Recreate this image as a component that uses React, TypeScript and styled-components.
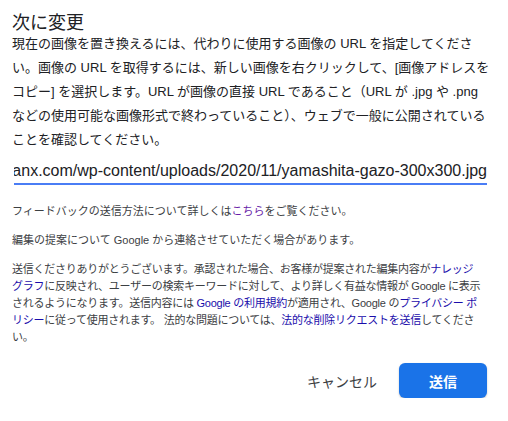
import * as React from "react";
import styled, { createGlobalStyle } from "styled-components";

const GlobalStyle = createGlobalStyle`
  html, body {
    margin: 0;
    padding: 0;
    background: #fff;
  }
  body {
    font-family: "Liberation Sans", "Noto Sans CJK JP", sans-serif;
    color: #202124;
  }
`;

const Dialog = styled.div`
  width: 478px;
  padding: 15px 18px 0 12px;
`;

const Title = styled.h2`
  margin: 0;
  font-size: 18px;
  font-weight: 400;
  line-height: 17px;
  color: #202124;
`;

const Lead = styled.p`
  margin: 0;
  font-size: 13px;
  line-height: 24px;
  color: #202124;
`;

const UrlField = styled.div`
  margin: 7px 3px 0 2px;
  height: 24px;
  border-bottom: 2px solid #4a7df5;
  overflow: hidden;
  white-space: nowrap;
  display: flex;
  justify-content: flex-end;
  font-size: 16px;
  line-height: 24px;
  color: #202124;
`;

const Notes = styled.div`
  margin-top: 18px;
  display: flex;
  flex-direction: column;
  gap: 12px;
`;

const Note = styled.p<{ $tight?: boolean }>`
  margin: 0;
  font-size: 11px;
  line-height: 17px;
  color: #3c4043;
  white-space: ${(p) => (p.$tight ? "nowrap" : "normal")};
  letter-spacing: ${(p) => (p.$tight ? "-0.25px" : "normal")};
`;

const Link = styled.a<{ $visited?: boolean }>`
  color: ${(p) => (p.$visited ? "#681da8" : "#1a0dab")};
  text-decoration: none;
`;

const Actions = styled.div`
  margin: 17px 3px 0 0;
  display: flex;
  justify-content: flex-end;
  align-items: center;
  gap: 10px;
`;

const TextButton = styled.button`
  border: none;
  background: none;
  padding: 0 12px;
  height: 35px;
  font-family: inherit;
  font-size: 14px;
  color: #3c4043;
`;

const PrimaryButton = styled.button`
  border: none;
  width: 88px;
  height: 35px;
  border-radius: 6px;
  background: #1a73e8;
  color: #fff;
  font-family: inherit;
  font-size: 14px;
  font-weight: 700;
  box-shadow: 0 1px 2px rgba(60, 64, 67, 0.3);
`;

export default function App() {
  return (
    <>
      <GlobalStyle />
      <Dialog>
        <Title>次に変更</Title>
        <Lead>
          現在の画像を置き換えるには、代わりに使用する画像の URL を指定してください。画像の URL を取得するには、新しい画像を右クリックして、[画像アドレスをコピー] を選択します。URL が画像の直接 URL であること（URL が .jpg や .png などの使用可能な画像形式で終わっていること）、ウェブで一般に公開されていることを確認してください。
        </Lead>
        <UrlField>
          <span>anx.com/wp-content/uploads/2020/11/yamashita-gazo-300x300.jpg</span>
        </UrlField>
        <Notes>
          <Note>
            フィードバックの送信方法について詳しくは<Link $visited href="#">こちら</Link>をご覧ください。
          </Note>
          <Note>編集の提案について Google から連絡させていただく場合があります。</Note>
          <Note $tight>
            送信くださりありがとうございます。承認された場合、お客様が提案された編集内容が<Link href="#">ナレッジ</Link>
            <br />
            <Link href="#">グラフ</Link>に反映され、ユーザーの検索キーワードに対して、より詳しく有益な情報が Google に表示
            <br />
            されるようになります。送信内容には <Link href="#">Google の利用規約</Link>が適用され、Google の
            <Link href="#">プライバシー ポ</Link>
            <br />
            <Link href="#">リシー</Link>に従って使用されます。 法的な問題については、
            <Link href="#">法的な削除リクエストを送信</Link>してくださ
            <br />
            い。
          </Note>
        </Notes>
        <Actions>
          <TextButton>キャンセル</TextButton>
          <PrimaryButton>送信</PrimaryButton>
        </Actions>
      </Dialog>
    </>
  );
}
